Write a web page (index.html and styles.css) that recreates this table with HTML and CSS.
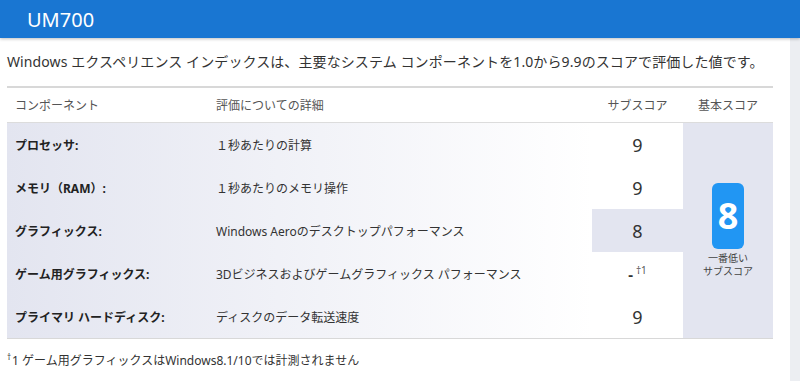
FILE: index.html
```html
<!DOCTYPE html>
<html lang="ja">
<head>
    <meta charset="UTF-8">
    <title>UM700 - Windows エクスペリエンス インデックス</title>
    <link rel="stylesheet" href="styles.css">
</head>
<body>
    <header class="topbar">
        <h1 class="title">UM700</h1>
    </header>
    <div class="page">
        <main class="card">
            <p class="intro">Windows エクスペリエンス インデックスは、主要なシステム コンポーネントを1.0から9.9のスコアで評価した値です。</p>
            <table class="wei">
                <thead>
                    <tr>
                        <th class="col-name">コンポーネント</th>
                        <th class="col-desc">評価についての詳細</th>
                        <th class="col-sub">サブスコア</th>
                        <th class="col-base">基本スコア</th>
                    </tr>
                </thead>
                <tbody>
                    <tr>
                        <td class="name">プロセッサ:</td>
                        <td class="desc">１秒あたりの計算</td>
                        <td class="sub">9</td>
                        <td class="base" rowspan="5">
                            <div class="badge">8</div>
                            <div class="badge-note">一番低い</div>
                            <div class="badge-note">サブスコア</div>
                        </td>
                    </tr>
                    <tr>
                        <td class="name">メモリ（RAM）:</td>
                        <td class="desc">１秒あたりのメモリ操作</td>
                        <td class="sub">9</td>
                    </tr>
                    <tr>
                        <td class="name">グラフィックス:</td>
                        <td class="desc">Windows Aeroのデスクトップパフォーマンス</td>
                        <td class="sub lowest">8</td>
                    </tr>
                    <tr>
                        <td class="name">ゲーム用グラフィックス:</td>
                        <td class="desc">3Dビジネスおよびゲームグラフィックス パフォーマンス</td>
                        <td class="sub none">-<sup>†1</sup></td>
                    </tr>
                    <tr>
                        <td class="name">プライマリ ハードディスク:</td>
                        <td class="desc">ディスクのデータ転送速度</td>
                        <td class="sub">9</td>
                    </tr>
                </tbody>
            </table>
            <p class="note"><sup>†</sup>1 ゲーム用グラフィックスはWindows8.1/10では計測されません</p>
        </main>
    </div>
</body>
</html>
```

FILE: styles.css
```css
body {
    margin: 0;
    font-family: "Noto Sans", "Noto Sans CJK JP", sans-serif;
    color: #333;
    background: #eceef2;
}
.topbar {
    background: #1976d2;
    height: 38px;
    padding: 0 27px;
    display: flex;
    align-items: center;
    box-shadow: 0 1px 3px rgba(0, 0, 0, 0.25);
    position: relative;
    z-index: 1;
}
.title {
    margin: 0;
    color: #fff;
    font-size: 20px;
    font-weight: 400;
}
.page {
    display: flex;
}
.card {
    width: 790px;
    background: #fff;
    padding: 13px 0 12px;
    min-height: 317px;
    box-sizing: border-box;
}
.intro {
    margin: 0 0 14px 7px;
    font-size: 14px;
    letter-spacing: 0.1px;
    line-height: 21px;
    color: #333;
}
.wei {
    margin-left: 7px;
    width: 766px;
    border-collapse: collapse;
    border-top: 2px solid #d8d8d8;
    border-bottom: 1px solid #d8d8d8;
}
.wei th {
    height: 34px;
    font-size: 12px;
    font-weight: 400;
    color: #555;
    text-align: left;
    border-bottom: 1px solid #dcdcdc;
    padding: 0;
}
.wei .col-name { width: 201px; padding-left: 8px; }
.wei .col-desc { width: 376px; }
.wei .col-sub, .wei .col-base { text-align: center; }
.wei .col-sub { width: 91px; }
.wei .col-base { width: 90px; }
.wei tbody tr {
    background: linear-gradient(to right, #e3e5f0, #ffffff 585px);
}
.wei td {
    height: 43px;
    padding: 0;
    font-size: 12px;
}
.name {
    padding-left: 8px !important;
    font-weight: 700;
    color: #222;
}
.desc {
    color: #333;
}
.sub {
    text-align: center;
    font-size: 18px !important;
    background: #fff;
    color: #333;
}
.sub.lowest {
    background: #e3e5f0;
}
.sub.none {
    font-size: 15px !important;
    font-weight: 700;
}
.sub sup {
    font-size: 10px;
    font-weight: 400;
    margin-left: 3px;
    color: #555;
}
.base {
    background: #e3e5f0;
    text-align: center;
    vertical-align: middle;
}
.badge {
    width: 32px;
    height: 66px;
    margin: 0 auto 3px;
    border-radius: 6px;
    background: #2196f3;
    color: #fff;
    font-size: 36px;
    font-weight: 700;
    line-height: 66px;
}
.badge-note {
    font-size: 10px;
    line-height: 13px;
    color: #444;
}
.note {
    margin: 12px 0 0 7px;
    font-size: 12px;
    color: #333;
}
.note sup {
    font-size: 8px;
    margin-right: 1px;
}
```
